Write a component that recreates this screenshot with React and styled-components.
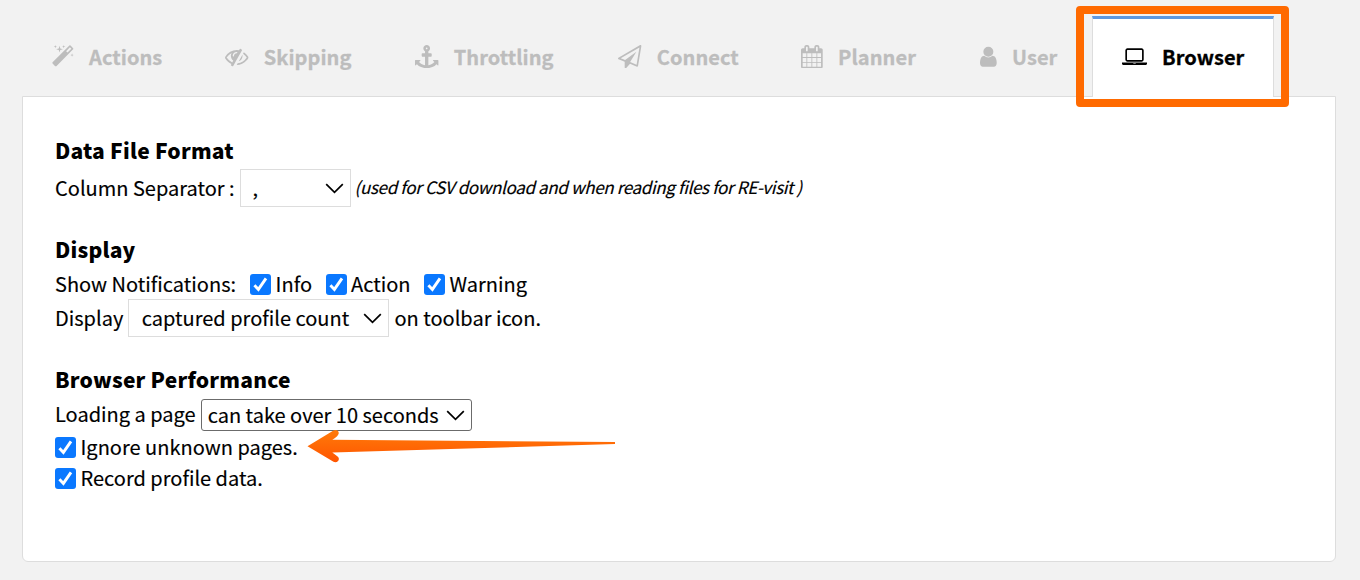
import React from 'react';
import styled, { createGlobalStyle } from 'styled-components';

const GlobalStyle = createGlobalStyle`
  * {
    box-sizing: border-box;
  }
  body {
    margin: 0;
    background-color: #f2f2f2;
    font-family: "Noto Sans CJK SC", "Noto Sans", sans-serif;
    color: #000;
  }
`;

const tabs = [
  {
    label: 'Actions',
    width: 173,
    box: '64 0 1664 1792',
    path: 'M1254 581l293-293-107-107-293 293zm447-293q0 27-18 45l-1286 1286q-18 18-45 18t-45-18l-198-198q-18-18-18-45t18-45l1286-1286q18-18 45-18t45 18l198 198q18 18 18 45zm-1351-190l98 30-98 30-30 98-30-98-98-30 98-30 30-98zm350 162l196 60-196 60-60 196-60-196-196-60 196-60 60-196zm930 478l98 30-98 30-30 98-30-98-98-30 98-30 30-98zm-640-640l98 30-98 30-30 98-30-98-98-30 98-30 30-98z',
  },
  {
    label: 'Skipping',
    width: 190,
    box: '0 0 1792 1792',
    path: 'M555 1335l78-141q-87-63-136-159t-49-203q0-121 61-225-229 117-381 353 167 258 427 375zm389-759q0-20-14-34t-34-14q-125 0-214.5 89.5t-89.5 214.5q0 20 14 34t34 14 34-14 14-34q0-86 61-147t147-61q20 0 34-14t14-34zm363-191q0 7-1 9-106 189-316 567t-315 566l-49 89q-10 16-28 16-12 0-134-70-16-10-16-28 0-12 44-87-143-65-263.5-173t-208.5-245q-20-31-20-69t20-69q153-235 380-371t496-136q89 0 180 17l54-97q10-16 28-16 5 0 18 6t31 15.5 33 18.5 31.5 18.5 19.5 11.5q16 10 16 27zm37 447q0 139-79 253.5t-209 164.5l280-502q8 45 8 84zm448 128q0 35-20 69-39 64-109 145-150 172-347.5 267t-419.5 95l74-132q212-18 392.5-137t301.5-307q-115-179-282-294l63-112q95 64 182.5 153t144.5 182q20 34 20 69z',
  },
  {
    label: 'Throttling',
    width: 203,
    box: '0 0 1792 1792',
    path: 'M960 256q0-26-19-45t-45-19-45 19-19 45 19 45 45 19 45-19 19-45zm832 928v352q0 22-20 30-8 2-12 2-13 0-23-9l-93-93q-119 143-318.5 226.5t-429.5 83.5-429.5-83.5-318.5-226.5l-93 93q-9 9-23 9-4 0-12-2-20-8-20-30v-352q0-14 9-23t23-9h352q22 0 30 20 8 19-7 35l-100 100q67 91 189.5 153.5t271.5 82.5v-647h-192q-26 0-45-19t-19-45v-128q0-26 19-45t45-19h192v-163q-58-34-93-92.5t-35-128.5q0-106 75-181t181-75 181 75 75 181q0 70-35 128.5t-93 92.5v163h192q26 0 45 19t19 45v128q0 26-19 45t-45 19h-192v647q149-20 271.5-82.5t189.5-153.5l-100-100q-15-16-7-35 8-20 30-20h352q14 0 23 9t9 23z',
  },
  {
    label: 'Connect',
    width: 183,
    box: '0 0 1792 1792',
    path: 'M1764 11q33 24 27 64l-256 1536q-5 29-32 45-14 8-31 8-11 0-24-5l-527-215-298 327q-18 21-47 21-14 0-23-4-19-7-30-23.5t-11-36.5v-452l-472-193q-37-14-40-55-3-39 32-59l1664-960q35-21 68 2zm-342 1499l221-1323-1434 827 336 137 863-639-478 797z',
  },
  {
    label: 'Planner',
    width: 179,
    box: '64 0 1664 1792',
    path: 'M192 1664h288v-288h-288v288zm352 0h320v-288h-320v288zm-352-352h288v-320h-288v320zm352 0h320v-320h-320v320zm-352-384h288v-288h-288v288zm736 736h320v-288h-320v288zm-384-736h320v-288h-320v288zm768 736h288v-288h-288v288zm-384-352h320v-320h-320v320zm-352-864v-288q0-13-9.5-22.5t-22.5-9.5h-64q-13 0-22.5 9.5t-9.5 22.5v288q0 13 9.5 22.5t22.5 9.5h64q13 0 22.5-9.5t9.5-22.5zm736 864h288v-320h-288v320zm-384-384h320v-288h-320v288zm384 0h288v-288h-288v288zm32-480v-288q0-13-9.5-22.5t-22.5-9.5h-64q-13 0-22.5 9.5t-9.5 22.5v288q0 13 9.5 22.5t22.5 9.5h64q13 0 22.5-9.5t9.5-22.5zm384-64v1280q0 52-38 90t-90 38h-1408q-52 0-90-38t-38-90v-1280q0-52 38-90t90-38h128v-96q0-66 47-113t113-47h64q66 0 113 47t47 113v96h384v-96q0-66 47-113t113-47h64q66 0 113 47t47 113v96h128q52 0 90 38t38 90z',
  },
  {
    label: 'User',
    width: 142,
    box: '256 0 1280 1792',
    path: 'M1536 1399q0 109-62.5 187t-150.5 78h-854q-88 0-150.5-78t-62.5-187q0-85 8.5-160.5t31.5-152 58.5-131 94-89 134.5-34.5q131 128 313 128t313-128q76 0 134.5 34.5t94 89 58.5 131 31.5 152 8.5 160.5zm-256-887q0 159-112.5 271.5t-271.5 112.5-271.5-112.5-112.5-271.5 112.5-271.5 271.5-112.5 271.5 112.5 112.5 271.5z',
  },
  {
    label: 'Browser',
    width: 182,
    active: true,
    box: '0 0 1920 1792',
    path: 'M416 1280q-66 0-113-47t-47-113v-704q0-66 47-113t113-47h1088q66 0 113 47t47 113v704q0 66-47 113t-113 47h-1088zm-32-864v704q0 13 9.5 22.5t22.5 9.5h1088q13 0 22.5-9.5t9.5-22.5v-704q0-13-9.5-22.5t-22.5-9.5h-1088q-13 0-22.5 9.5t-9.5 22.5zm1376 928h160v96q0 40-47 68t-113 28h-1600q-66 0-113-28t-47-68v-96h1760zm-720 96q16 0 16-16t-16-16h-160q-16 0-16 16t16 16h160z',
  },
];

const Chevron = () => (
  <svg width="19" height="11" viewBox="0 0 19 11" fill="none" stroke="#000" strokeWidth="1.7">
    <path d="M1.2 1.2l8.3 8.2 8.3-8.2" />
  </svg>
);

const Check = ({ label, gap, drop }) => (
  <CheckLabel $gap={gap}>
    <CheckBox $drop={drop}>
      <svg width="21" height="21" viewBox="0 0 21 21" fill="none" stroke="#fff" strokeWidth="2.9">
        <path d="M4.4 11.2l4 4.2 7.6-11" />
      </svg>
    </CheckBox>
    {label}
  </CheckLabel>
);

const App = () => {
  return (
    <Page>
      <GlobalStyle />
      <TabBar>
        {tabs.map((tab) => (
          <Tab key={tab.label} $width={tab.width} $active={tab.active}>
            <TabIcon viewBox={tab.box}>
              <path d={tab.path} />
            </TabIcon>
            <TabLabel>{tab.label}</TabLabel>
          </Tab>
        ))}
      </TabBar>
      <Panel>
        <Section>
          <Title>Data File Format</Title>
          <Row $height={38}>
            <Text>Column Separator :</Text>
            <Select $width={111} $height={38} $pad={12}>
              <span>,</span>
              <Chevron />
            </Select>
            <Note>(used for CSV download and when reading files for RE-visit )</Note>
          </Row>
        </Section>
        <Section>
          <Title>Display</Title>
          <Row $height={31}>
            <Text>Show Notifications:</Text>
            <Check label="Info" gap={9} drop={2} />
            <Check label="Action" gap={8.5} drop={2} />
            <Check label="Warning" gap={8.5} drop={2} />
          </Row>
          <Row $height={38}>
            <Text>Display</Text>
            <Select $width={261} $height={38} $pad={12.4}>
              <span>captured profile count</span>
              <Chevron />
            </Select>
            <Text>on toolbar icon.</Text>
          </Row>
        </Section>
        <Section>
          <Title>Browser Performance</Title>
          <Row $height={34}>
            <Text $raise={2}>Loading a page</Text>
            <Select $width={271} $height={32} $pad={6} $dark>
              <span>can take over 10 seconds</span>
              <Chevron />
            </Select>
          </Row>
          <Row $height={30}>
            <Check label="Ignore unknown pages." />
          </Row>
          <Row $height={32}>
            <Check label="Record profile data." />
          </Row>
        </Section>
      </Panel>
      <Highlight />
      <Arrow viewBox="0 0 310 34">
        <defs>
          <linearGradient id="arrow" x1="0" y1="0" x2="0" y2="1">
            <stop offset="0" stopColor="#ff7b0a" />
            <stop offset="1" stopColor="#ff5500" />
          </linearGradient>
        </defs>
        <path
          fill="url(#arrow)"
          d="M0.5 17.3L26.5 1.5C29.5 -0.2 33 2.5 31.3 5.5C30.2 7.7 28.2 9 25.3 10.7L308 13V15L25.3 23.6L30.3 27.2C34 30 30.5 34.6 26.5 32.8Z"
        />
      </Arrow>
    </Page>
  );
};

const Page = styled.div`
  position: relative;
  width: 1360px;
  height: 580px;
  padding: 16px 24px 0 22px;
  overflow: hidden;
  background-color: #f2f2f2;
`;

const TabBar = styled.div`
  display: flex;
  height: 80px;
`;

const Tab = styled.div`
  display: flex;
  align-items: center;
  gap: 15px;
  width: ${(props) => props.$width}px;
  height: 81px;
  padding: 0 0 0 30.4px;
  color: ${(props) => (props.$active ? '#000' : '#bdbdbd')};
  ${(props) =>
    props.$active &&
    `
    z-index: 1;
    padding: 0 0 3px 29px;
    background-color: #fff;
    border: 1px solid #ddd;
    border-top: 3px solid #5f98e0;
    border-bottom: none;
  `}
`;

const TabIcon = styled.svg`
  flex: none;
  height: 23.4px;
  fill: currentColor;
`;

const TabLabel = styled.span`
  font-size: 20px;
  font-weight: 700;
  line-height: 30px;
  letter-spacing: 0.05px;
  -webkit-text-stroke: 0.3px currentColor;
`;

const Panel = styled.div`
  width: 1314px;
  height: 466px;
  padding: 35px 32px 0;
  background-color: #fff;
  border: 1px solid #ddd;
  border-radius: 0 0 6px 6px;
`;

const Section = styled.div`
  margin-bottom: 24px;
`;

const Title = styled.div`
  height: 37px;
  font-size: 21px;
  font-weight: 900;
  line-height: 37px;
  letter-spacing: 0.22px;
`;

const Row = styled.div`
  display: flex;
  align-items: center;
  gap: 5px;
  height: ${(props) => props.$height}px;
  font-size: 20px;
  line-height: 30px;
  white-space: nowrap;
`;

const Text = styled.span`
  padding-bottom: ${(props) => props.$raise || 0}px;
  -webkit-text-stroke: 0.15px currentColor;
`;

const Note = styled.em`
  margin-left: -1px;
  font-size: 17px;
  letter-spacing: -0.35px;
  line-height: 28px;
  padding-bottom: 2px;
  -webkit-text-stroke: 0.15px currentColor;
`;

const Select = styled.div`
  display: flex;
  align-items: center;
  justify-content: space-between;
  width: ${(props) => props.$width}px;
  height: ${(props) => props.$height}px;
  padding: 0 6px 0 ${(props) => props.$pad}px;
  background-color: #fff;
  border: 1px solid ${(props) => (props.$dark ? '#6b6b6b' : '#ddd')};
  border-radius: ${(props) => (props.$dark ? 3 : 0)}px;
  -webkit-text-stroke: 0.15px currentColor;
`;

const CheckLabel = styled.label`
  display: flex;
  align-items: center;
  gap: 4.5px;
  margin-left: ${(props) => props.$gap || 0}px;
  -webkit-text-stroke: 0.15px currentColor;
`;

const CheckBox = styled.span`
  display: flex;
  width: 21px;
  height: 21px;
  margin-top: ${(props) => props.$drop || 0}px;
  background-color: #0a78ff;
  border-radius: 3px;
`;

const Highlight = styled.div`
  position: absolute;
  left: 1076px;
  top: 6px;
  width: 213px;
  height: 101px;
  z-index: 2;
  border: 8px solid #ff6a00;
  border-radius: 4px;
`;

const Arrow = styled.svg`
  position: absolute;
  left: 307px;
  top: 429px;
  width: 310px;
  height: 34px;
`;

export default App;
